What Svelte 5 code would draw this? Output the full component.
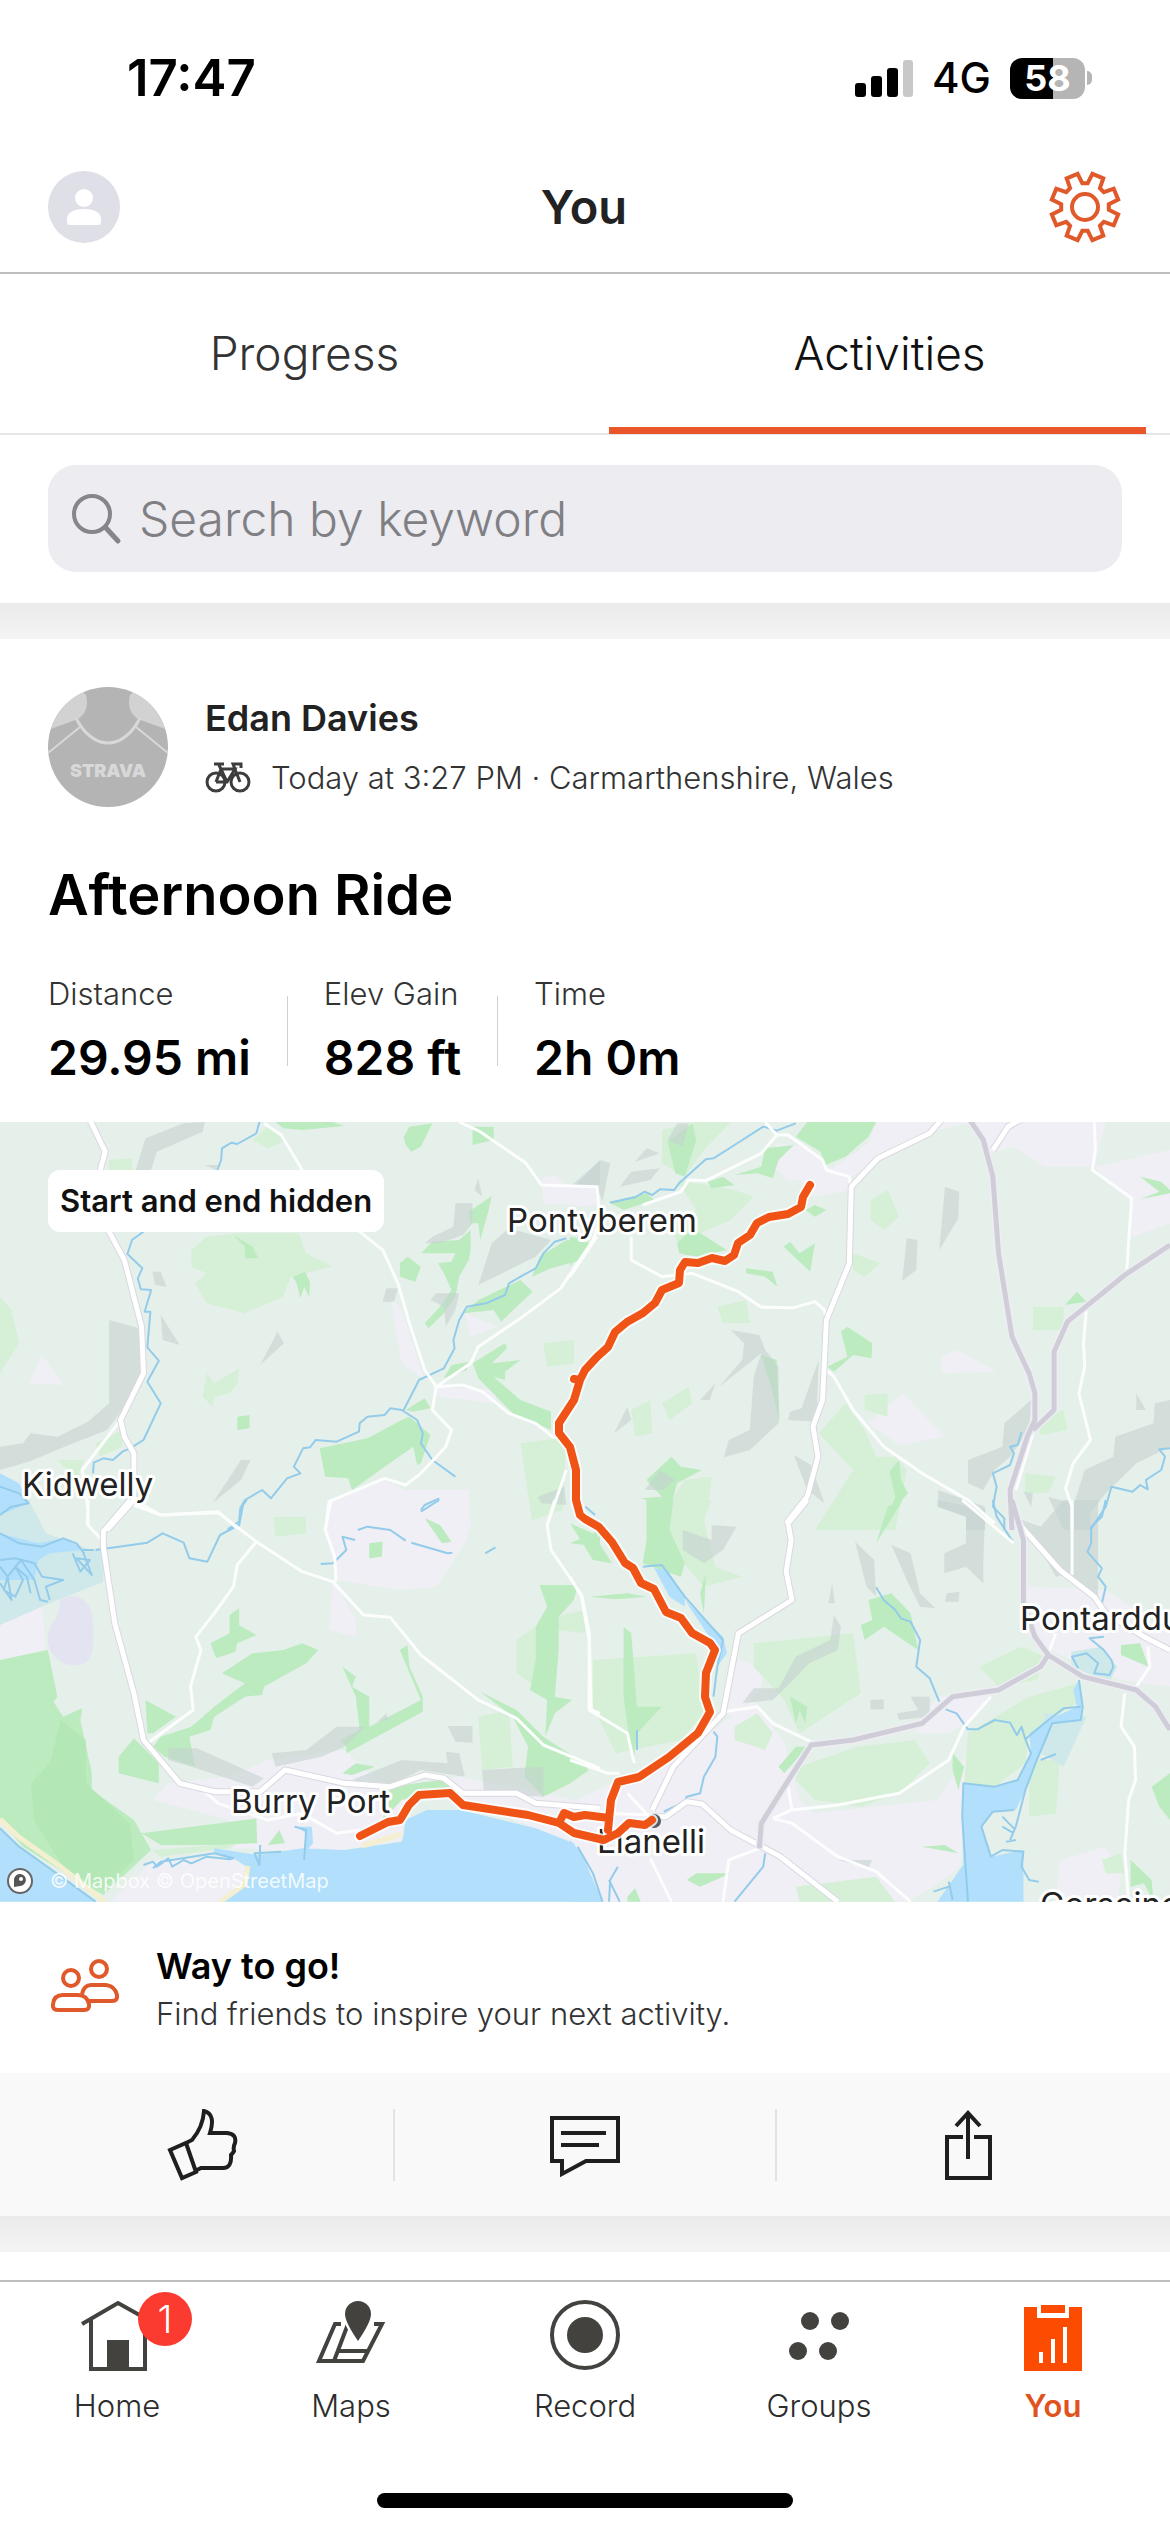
<script>
  let query = $state('');
  let section = $state('Activities');

  const stats = [
    { label: 'Distance', value: '29.95 mi' },
    { label: 'Elev Gain', value: '828 ft' },
    { label: 'Time', value: '2h 0m' }
  ];

  // Outline of the settings gear: eight teeth round the centre.
  const gear = (() => {
    const pts = [];
    for (let k = 0; k < 8; k++) {
      const mid = 22.5 + k * 45;
      for (const [offset, r] of [[-16, 24], [-10, 34], [10, 34], [16, 24]]) {
        const a = ((mid + offset) * Math.PI) / 180;
        pts.push(`${(37 + r * Math.sin(a)).toFixed(1)},${(37 - r * Math.cos(a)).toFixed(1)}`);
      }
    }
    return pts.join(' ');
  })();

  // Each list entry is "x y x y ..." in tile units; a tile is 1568 by 1260 units and covers 600 by 420.
  const tiles = [
    {
      at: 'translate(0 -12) scale(0.38265 0.33333)',
      urban: ['860 1180 1000 1110 1060 1140 1225 1140 1230 1260 850 1260', '1020 560 1050 600 1110 810 1050 760', '1215 610 1300 650 1230 680', '75 820 110 735 165 825', '1130 830 1300 840 1290 880 1150 860', '1415 205 1450 195 1480 225 1560 230 1565 285 1420 280'],
      meadow: ['500 420 540 380 620 370 780 370 800 430 870 470 760 500 740 560 640 610 540 580 510 520 540 490 500 470', '0 560 30 600 50 700 0 790', '540 790 560 820 625 775 622 820 600 850 560 860 555 890 530 860', '660 90 700 50 750 90 700 115', '1420 700 1500 690 1500 760 1430 770', '1360 1000 1480 980 1470 1200 1390 1230', '150 1050 220 1050 200 1110', '285 150 345 145 345 180 285 180', '250 1000 320 960 320 1010 260 1040'],
      wood: ['720 36 870 36 900 48 790 60 740 55', '1055 80 1070 50 1130 40 1100 110 1075 125 1060 105', '1235 50 1290 50 1290 90 1235 105', '1225 305 1285 258 1275 310 1255 390 1250 340 1230 340', '1100 430 1130 395 1200 390 1230 360 1230 420 1225 450 1200 500 1190 560 1160 610 1120 655 1110 640 1150 590 1180 540 1160 490 1145 460 1180 455 1190 430 1160 430', '1045 460 1065 440 1100 470 1085 515 1045 500', '1390 500 1410 440 1480 390 1540 400 1520 450 1440 475', '1210 610 1250 570 1360 510 1392 545 1350 590 1310 635 1290 600', '610 375 660 410 675 445 640 445 640 410', '765 500 797 485 810 515 808 560 795 530 785 565 775 520', '1235 760 1320 700 1325 715 1285 760 1360 750 1320 785 1320 810 1290 800 1360 870 1440 905 1440 960 1340 910 1250 805', '1160 805 1180 765 1225 755 1220 780', '835 1015 960 985 1050 930 1070 920 1125 975 1100 1060 1090 1065 1080 1010 1000 1075 920 1140 910 1105 850 1100', '1060 900 1110 865 1125 895 1080 905', '620 920 652 915 652 955 620 960'],
      hill: ['355 180 380 85 480 40 535 36 530 65 410 125 395 180', '285 630 380 660 370 830 345 860 280 960 180 1005 75 1055 0 1080 0 1010 60 1000 80 970 150 980 230 935 285 880', '1505 225 1568 150 1568 225', '1250 525 1285 400 1330 355 1440 390 1400 440', '1190 280 1235 280 1235 340 1210 375 1150 400 1110 400 1130 380 1185 350', '1240 240 1250 205 1260 260', '1000 575 1010 535 1040 535 1030 575', '1125 570 1140 550 1200 550 1190 600 1165 650 1160 590', '398 485 420 485 435 530 405 525', '420 615 470 705 425 690', '680 765 725 665 742 700', '555 1180 630 1050 655 1050 630 1110', '1405 1160 1475 1130 1480 1185 1415 1180', '535 165 570 165 565 180'],
      marsh: ['0 1190 75 1180 100 1240 105 1260 0 1260'],
      water: ['0 1090 50 1120 75 1180 0 1215'],
      river: ['678 36 670 70 620 102 605 98 580 115 578 150 568 180', '375 365 345 390 333 432 372 475 360 505 368 538 395 540 378 605 393 605 385 712 415 752 385 815 420 880 375 990 340 1015 320 1025 295 1050 270 1045 245 1058 243 1090', '1480 385 1450 395 1420 430 1400 475 1365 497 1330 520 1320 555 1270 580 1220 590 1200 630 1185 690 1188 715 1160 775 1095 810 1055 900', '1190 1100 1130 1050 1100 1000 1105 970 1090 930 1050 900 1020 895 1005 915 960 920 940 940 938 965 880 995 825 990 810 1012 792 1015 768 1070 785 1090 750 1105 708 1165 685 1140 640 1170 628 1195 625 1235 595 1258', '1100 1200 1110 1185 1148 1165', '0 1130 50 1150 75 1180 30 1190 0 1215'],
      lane: ['690 40 735 75 790 180 830 260 940 365 1000 420 1040 520 1070 640 1110 780 1140 830 1210 825 1260 845 1330 910 1400 940 1450 985', '1140 830 1230 760 1250 710 1360 625 1465 535 1550 390 1568 330 1560 230 1415 225 1375 160 1255 65 1200 36', '1140 830 1130 900 1180 960 1165 1010 1100 1090 1060 1125 1005 1105 860 1175 850 1260', '315 930 215 1080 230 1200 228 1245', '350 1185 420 1215 570 1205 620 1255', '1480 1080 1430 1245'],
      road: ['235 30 275 125 262 180 285 365 325 450 370 650 375 790 315 930 325 980 350 1030 350 1170 280 1260'],
      trunk: []
    },
    {
      at: 'translate(570 -12) scale(0.38265 0.33333)',
      urban: ['540 100 620 110 670 170 730 200 735 240 640 260 600 210 570 210 530 170', '800 36 1050 36 960 60 800 140 740 200 680 180 780 100', '1060 36 1400 36 1370 170 1240 170 1160 110 1100 130', '970 740 1010 720 1115 785 970 790', '780 940 870 850 980 980 860 1005', '1370 170 1568 120 1568 340 1470 380 1460 270', '0 225 70 230 75 280 40 290 0 285'],
      meadow: ['240 60 330 36 420 36 350 120 300 200 240 160', '280 210 430 240 480 260 420 330 280 400 270 360 330 300', '785 270 830 240 860 320 820 360 785 330', '740 430 810 460 770 500 740 480', '385 590 460 570 470 640 400 640', '1190 1090 1270 1100 1250 1150 1190 1150', '1210 590 1290 590 1290 660 1210 660', '770 855 830 850 830 920 770 900', '650 970 720 880 770 960 800 1040 850 1040 880 1080 850 1260 640 1260 740 1080', '160 900 210 870 215 970 170 980', '240 880 310 830 320 880 260 930', '300 1110 370 1100 360 1200 280 1260 210 1260', '1220 930 1290 900 1300 960 1230 975'],
      wood: ['590 80 620 36 800 36 780 80 720 140 668 165 655 125', '255 95 320 40 330 90 300 200 275 190', '430 195 500 170 510 115 585 105 545 150 530 205 490 190', '360 215 400 200 430 225 370 235', '280 400 320 355 410 420 330 440 285 430', '558 410 575 395 600 430 640 400 628 485', '460 475 530 485 542 530 510 500 460 490', '708 665 725 650 790 700 788 745 740 735 690 785 672 770 725 740', '615 300 640 285 670 300 640 320', '1293 585 1325 545 1350 575', '1490 200 1545 215 1568 240 1568 250 1490 268 1540 245', '185 1165 240 1160 200 1110 265 1040 290 1070 345 1080 280 1120 270 1160 240 1260 230 1180', '835 1085 860 1050 865 1110 883 1150 845 1200 815 1260 850 1160', '0 380 50 390 0 470', '500 735 540 750 548 940 530 850', '100 275 200 250 220 270 140 300'],
      hill: ['5 225 80 150 105 160 85 275 70 230', '280 40 310 40 295 110 255 90', '130 230 160 185 235 175 210 210', '170 155 200 115 235 130', '980 230 1017 245 1015 325 965 420', '880 385 908 390 905 480 868 512', '420 660 495 675 510 720 545 770 545 940 470 1020 402 1042 415 990 470 960 480 800 500 730 390 830 450 750 455 700', '570 930 575 905 605 895 650 750 645 900 640 935', '585 1035 630 1065 665 1180 620 1140', '115 970 150 890 160 930', '340 870 380 820 365 870', '195 1140 235 1080 275 1110 240 1140', '1040 1120 1040 1050 1130 1010 1135 940 1205 870 1200 960 1150 1040 1110 1080 1080 1140', '962 1140 1085 1190 1085 1260 1035 1260 1035 1220 962 1190', '1425 980 1525 940 1528 880 1568 870 1568 1010 1480 1060 1400 1150 1360 1210 1360 1260 1310 1260 1320 1170 1345 1080 1420 1040', '1480 850 1505 900 1480 900', '1250 1160 1310 1180 1310 1260 1290 1260', '1185 1145 1210 1150 1205 1190'],
      marsh: [],
      water: [],
      river: ['590 40 540 62 505 50 430 105 375 145 355 148 285 220 272 240 235 238 215 255 195 245 170 262 105 278', '1180 965 1170 1005 1150 1010 1160 1030 1150 1065 1105 1090 1115 1130 1105 1190 1135 1225 1135 1260', '1568 1015 1540 1018 1555 1040 1545 1080 1505 1110 1510 1138 1490 1125 1470 1145 1415 1130 1400 1190 1360 1260'],
      lane: ['670 780 690 800 740 900 820 1010 920 1090 1040 1170 1110 1240', '190 285 290 245 310 210 355 212 500 130 540 75 570 75 660 150 670 180 730 200 735 240', '510 36 540 75', '160 380 160 450 240 500 320 490 440 545 500 592 585 593 640 575 665 600 670 630', '1370 36 1373 120 1365 180 1468 265 1455 480', '1350 590 1342 700 1345 770 1330 850 1360 990 1315 1060 1295 1135 1312 1190 1312 1260', '70 380 0 500', '1210 970 1165 1140'],
      road: ['970 30 940 70 805 145 735 230 730 460 670 630 660 870 635 950 648 1040 620 1160 565 1240', '1175 30 1145 50 1105 120'],
      trunk: ['1045 30 1080 90 1105 200 1120 430 1155 680 1200 790 1215 850 1215 930 1195 980 1150 1140 1155 1260', '1568 405 1450 495 1300 635 1265 725 1265 900 1210 960']
    },
    {
      at: 'translate(0 378) scale(0.38265 0.33333)',
      urban: ['860 0 1225 0 1220 120 1140 260 1040 270 880 240 850 90', '870 240 930 360 930 410 860 390', '0 375 110 320 120 450 0 480', '440 850 600 830 700 780 900 750 1000 860 1200 830 1500 900 1568 920 1568 1205 1540 1140 1500 1030 1210 900 1110 880 1050 960 1055 1020 900 1050 700 1050 560 1040 600 960 400 900', '290 1205 400 1080 610 1075 650 1110 640 1150 580 1205'],
      meadow: ['715 50 800 50 800 100 720 110', '1250 650 1330 630 1340 800 1260 810', '1350 420 1400 380 1400 560 1350 520', '1450 350 1530 330 1530 400 1460 390', '400 1050 620 1030 600 1045 420 1070'],
      wood: ['0 480 125 450 150 590 140 605 165 650 215 625 210 660 240 820 240 870 350 960 395 1050 270 1185 200 1140 60 1040 0 960', '380 600 460 650 400 700 385 700', '310 770 350 715 415 790 415 850 310 820', '550 430 600 400 600 345 625 325 625 375 670 405 620 430 615 455 565 475', '580 520 600 505 660 460 740 450 790 430 832 450 800 490 690 560 685 585 640 590 560 650 550 690 495 710 510 800 430 770 400 740 420 710 500 680 560 620 640 550 600 530', '895 500 930 530 920 560 965 590 965 680 1100 600 1045 450 1065 435 1070 500 1105 590 1105 635 905 760 905 740 890 720 940 690 930 590', '370 1000 670 955 672 1030 560 1035 420 1035', '700 1035 730 990 745 1030', '895 820 930 790 980 800 920 825', '1410 255 1510 255 1500 300 1460 350 1460 450 1450 590 1495 600 1450 640 1425 710 1430 600 1385 570 1400 480 1400 380 1430 320', '1255 575 1350 630 1420 710 1540 800 1490 850 1420 890 1370 830 1380 740 1340 650', '1490 130 1568 90 1568 140', '965 130 1000 125 998 170 965 175', '1110 55 1150 75 1180 125 1155 130', '1020 860 1150 840 1180 860 1050 900 1000 960'],
      hill: ['440 745 515 745 690 835 660 860 500 800 440 780', '710 760 800 750 880 680 955 680 900 740 840 770 720 800', '920 840 1050 780 1170 790 1165 755 1200 760 1215 830 1100 810 1010 860', '1170 678 1235 678 1235 728 1190 725', '1260 810 1420 800 1420 890 1265 880', '985 665 1010 640 1015 660'],
      marsh: ['0 0 75 0 120 100 240 150 270 140 270 245 130 310 0 375'],
      water: ['0 100 100 130 170 115 220 150 130 160 100 180 90 240 0 240', '0 985 50 1040 160 1130 250 1205 0 1205', '580 1205 640 1150 645 1100 610 1075 560 1060 560 1045 675 1065 730 1055 790 1045 900 1050 1050 1025 1055 1000 1060 960 1115 930 1205 930 1400 985 1500 1030 1540 1140 1568 1205', '775 980 815 980 818 1030 795 1060 800 1000', '0 0 75 0 30 20 0 40'],
      river: ['250 150 385 128 425 100 480 128 495 175 542 185 575 105 625 75 635 15 645 0', '838 192 870 190 905 150 895 110 928 120', '935 90 960 80 1020 90 1060 122', '1075 128 1170 160 1182 158', '1268 160 1295 142', '1100 35 1148 0', '375 1095 400 1085 410 1100 440 1075 450 1100 480 1080 500 1090 540 1070 600 1078 610 1075 560 1060 420 1085 400 1105', '680 1035 678 1095 665 1060 735 1055', '1530 20 1555 45', '0 100 50 130 110 140 165 115 200 130 220 160', '0 180 40 175 90 190 110 230 165 240 120 260 130 300', '0 200 20 230 10 270 40 290 60 240 40 200 70 230 80 280', '190 160 210 215 235 180 200 175 240 225 215 150 245 150', '0 250 30 300 20 230 55 180 90 240 105 300 125 305', '770 980 800 990 795 1080', '0 985 50 1040 160 1130 250 1205'],
      lane: ['230 0 230 75 270 125', '350 0 420 45 570 38 670 125 790 215 870 245 950 345 1020 352 1100 465 1250 600 1350 655 1420 735 1568 805', '865 0 850 90 875 170 878 245', '670 125 620 195 610 260 560 340 512 410 525 450 498 560 505 630 385 730', '1450 0 1430 75 1440 150 1520 285 1540 400 1545 630 1568 640', '530 870 570 910 700 960 790 940 880 1000 940 990'],
      road: ['340 0 270 95 270 140 300 370 350 580 375 720 470 850 560 875 680 875 745 810 900 850 1020 860 1110 825 1160 835 1210 880 1350 880 1400 910 1568 925'],
      trunk: []
    },
    {
      at: 'translate(570 378) scale(0.38265 0.33333)',
      urban: ['340 720 480 600 560 730 600 900 640 940 960 900 1040 760 1020 1100 950 1160 880 1205 70 1205 30 1020 0 1000 0 910 110 850 250 800', '440 480 500 500 500 560 430 650 400 640', '960 590 1110 570 1060 650 990 700 900 700', '1280 1080 1400 1040 1440 1120 1430 1205 1270 1205', '1190 260 1400 270 1568 400 1568 560 1440 540 1270 460 1190 400'],
      meadow: ['430 680 490 640 530 700 510 750 430 720', '60 480 330 460 350 640 290 720 120 760 60 620', '600 800 750 740 900 720 940 790 860 880 760 920 640 900 590 840', '1070 500 1180 440 1240 470 1220 540 1120 560', '1040 700 1200 590 1330 550 1340 600 1200 700 1190 790 1110 860 1030 850', '1200 780 1280 780 1270 940 1200 950', '250 0 370 0 350 60 380 200 450 230 350 260 290 180 220 100', '480 430 740 400 760 580 600 700 560 600 480 500', '1390 1080 1440 1060 1450 1120 1400 1120', '590 1160 800 1130 850 1205 600 1205'],
      wood: ['0 70 60 100 110 190 60 180', '200 0 270 0 260 90 300 190 290 230 190 190 200 120', '780 300 840 280 890 340 910 450 820 380 770 420 760 375 790 360', '140 380 160 400 175 620 240 620 175 700 165 800 140 590', '50 290 150 280 200 290 120 298', '0 780 50 810 0 850', '800 130 870 0 830 20', '1000 760 1030 800 1015 870 1000 810', '1440 435 1490 430 1512 500 1440 465', '1465 1080 1520 1140 1525 1205 1500 1150 1465 1160', '305 1140 330 1120 420 1120 340 1160', '150 1190 170 1165 185 1205 150 1205', '1520 860 1568 820 1568 960 1540 920', '575 590 620 620 615 670 600 630 590 670', '545 800 590 740 620 740 560 820', '920 1040 980 1035 1015 1060', '340 280 355 220 350 340'],
      hill: ['295 90 370 120 370 75 435 80 400 150 350 190 295 150', '745 125 795 180 800 290 775 260', '840 135 890 160 915 280 955 325 915 320 880 240', '978 160 1035 130 1035 50 960 20 960 0 1085 30 1080 190 1080 250 1035 200 978 220', '675 310 685 250 692 310', '985 280 1018 275 1015 305 980 305', '450 610 480 565 545 565 590 470 680 420 690 345 708 380 700 450 625 490 575 550 530 600', '785 600 820 598 820 628 785 628', '855 640 910 630 890 590 940 590 940 650 860 660', '1180 60 1230 80 1290 0 1380 0 1380 290 1300 220 1270 230 1220 130', '700 1080 790 1080 780 1105'],
      marsh: ['1240 640 1350 650 1290 800 1230 760', '1310 455 1390 440 1430 500 1410 545 1310 500'],
      water: ['0 1020 30 1060 85 1205 0 1205', '1028 850 1110 860 1170 840 1205 760 1200 700 1250 660 1325 620 1315 570 1330 540 1340 620 1335 660 1260 670 1220 780 1190 870 1165 930 1105 935 1075 980 1100 1070 1185 1050 1185 1205 1030 1205 1025 950', '220 205 255 210 300 290 300 320 260 290', '300 300 400 410 410 460 385 500 375 430', '960 1205 1000 1140 1030 1090 1030 1205'],
      river: ['190 200 240 195 300 290 400 420 385 500 375 590', '375 695 385 710 380 770 350 830 340 880 305 890 300 905 245 935', '800 262 820 300 850 330 865 355 890 365 915 420 905 500 940 535 965 605', '982 628 1010 640 1040 688 1065 688 1110 660 1150 668 1168 705 1180 680 1190 718 1250 660 1290 625 1335 620', '1400 0 1390 50 1362 80 1362 130 1352 155 1390 205 1380 230 1400 260 1390 310', '1105 0 1115 50 1160 130', '510 1060 505 1100 430 1205', '125 1100 105 1140 102 1205', '102 1140 130 1205', '1190 718 1205 760 1170 840 1110 860 1028 850 1025 950 1040 1205', '990 1145 1000 1200', '950 1175 990 1160', '1130 950 1160 985', '1130 980 1160 1000', '1140 1025 1165 1020', '175 690 175 750', '1330 540 1340 620 1335 660 1260 670 1220 780 1190 870 1165 980 1150 1020', '1160 930 1105 935 1075 980 1100 1070 1130 1050 1185 1055 1180 1100 1200 1140 1225 1145', '1230 780 1270 762', '1328 505 1312 470 1350 460 1380 490 1370 520 1410 525 1420 500 1415 480 1395 450 1358 415 1395 410', '20 1040 60 1120 85 1205'],
      lane: ['1025 0 1160 130', '1312 0 1312 225', '1270 400 1250 460', '400 635 490 620 530 670 620 720 640 730', '1100 590 1030 680 990 780 860 880 700 915 580 930 530 955', '570 860 580 930', '530 955 580 970 700 1070 800 1115 890 1205', '495 1045 415 1080 400 1205', '1480 560 1515 500 1510 440', '1450 580 1440 680 1475 740 1478 840 1460 900 1450 1060 1460 1205', '0 230 30 290 50 420 50 630 150 700 168 790', '0 780 100 820 130 820', '210 1075 265 1205', '150 880 215 960', '0 920 90 940 215 945'],
      road: ['620 0 570 70 578 120 565 215 580 300 440 400 400 640 270 800 215 930', '215 950 250 950 305 905 345 912 420 990 550 1070 700 1205', '1180 80 1280 210 1370 290 1400 340 1500 410 1568 450'],
      trunk: ['1155 0 1185 120 1185 310 1215 410 1250 465 1340 530 1480 570 1530 620 1568 690', '1250 465 1230 500 1120 570 1000 590 920 670 740 720 630 735 560 860 500 970 495 1045']
    }
  ];

  const layers = [
    { kind: 'urban', area: true },
    { kind: 'meadow', area: true },
    { kind: 'marsh', area: true },
    { kind: 'wood', area: true },
    { kind: 'hill', area: true },
    { kind: 'water', area: true },
    { kind: 'river', area: false },
    { kind: 'lane', area: false },
    { kind: 'road', cls: 'road-edge', area: false },
    { kind: 'road', area: false },
    { kind: 'trunk', cls: 'trunk-edge', area: false },
    { kind: 'trunk', area: false }
  ];

  const toPath = (shapes, closed) => shapes.map((s) => `M${s}${closed ? 'Z' : ''}`).join('');

  const route =
    'M810 63 803 75 801 85 788 92 769 95 757 101 750 113 738 121 734 133 725 139 712 136 698 141 685 140 680 148 679 161 662 168 655 181 643 191 627 200 615 210 608 225 597 235 585 248 580 258 574 278 559 301 559 311 570 325 576 348 576 378 580 393 585 397 599 405 612 420 625 441 633 446 641 461 654 467 666 490 681 496 692 511 710 521 715 528 706 551 705 575 710 590 698 611 669 635 639 655 618 660 611 678 608 708' +
    'M580 258 574 257M609 696 585 693 574 695 564 691 559 701 574 711 604 718 618 711 629 701 645 703 652 698' +
    'M559 701 528 693 463 683 450 671 419 673 409 683 400 698 388 700 360 714';

  const places = [
    { name: 'Pontyberem', x: 507, y: 110 },
    { name: 'Kidwelly', x: 22, y: 374 },
    { name: 'Burry Port', x: 231, y: 691 },
    { name: 'Llanelli', x: 597, y: 731 },
    { name: 'Pontarddulais', x: 1020, y: 508 },
    { name: 'Gorseinon', x: 1040, y: 794 }
  ];
</script>

<div class="app">
  <div class="status">
    <span class="clock">17:47</span>
    <div class="status-right">
      <svg width="58" height="37" viewBox="0 0 58 37" aria-hidden="true">
        <rect x="0" y="23" width="11" height="14" rx="3" />
        <rect x="16" y="16" width="11" height="21" rx="3" />
        <rect x="32" y="8" width="11" height="29" rx="3" />
        <rect x="48" y="0" width="10" height="37" rx="3" fill="#c8c8c8" />
      </svg>
      <span class="network">4G</span>
      <div class="battery"><span class="cell">58</span><span class="nub"></span></div>
    </div>
  </div>

  <header>
    <button class="icon-btn" aria-label="Profile">
      <svg width="72" height="72" viewBox="0 0 72 72">
        <circle cx="36" cy="36" r="36" fill="#dfdfe7" />
        <circle cx="36" cy="27" r="9" fill="#fff" />
        <path d="M19 51v-4q2-9 17-9t17 9v4q0 3-3 3H22q-3 0-3-3z" fill="#fff" />
      </svg>
    </button>
    <h1>You</h1>
    <button class="icon-btn" aria-label="Settings">
      <svg width="74" height="74" viewBox="0 0 74 74" fill="none" stroke="#e0592a" stroke-width="4">
        <polygon points={gear} />
        <circle cx="37" cy="37" r="13" />
      </svg>
    </button>
  </header>

  <div class="tabs" role="tablist">
    {#each ['Progress', 'Activities'] as name}
      <button role="tab" aria-selected={section === name} class:active={section === name} onclick={() => (section = name)}>{name}</button>
    {/each}
  </div>

  <div class="search">
    <label class="field">
      <svg width="52" height="52" viewBox="0 0 52 52" fill="none" stroke="#85858a" stroke-linecap="round">
        <circle cx="21" cy="21" r="18" stroke-width="4" />
        <path d="M35 35 47 48" stroke-width="5" />
      </svg>
      <input type="text" placeholder="Search by keyword" aria-label="Search by keyword" bind:value={query} />
    </label>
  </div>

  <div class="strip"></div>

  <article>
    <div class="summary">
      <div class="athlete">
        <svg class="avatar" width="120" height="120" viewBox="0 0 120 120" aria-hidden="true">
          <defs><clipPath id="disc"><circle cx="60" cy="60" r="60" /></clipPath></defs>
          <g clip-path="url(#disc)">
            <rect width="120" height="120" fill="#b4b4b4" />
            <path d="M0 43 30 32Q42 24 38 8L30 0H0zM120 43 90 32Q78 24 82 8L90 0H120z" fill="#d2d2d2" />
            <path d="M28 31C36 47 48 56 60 56S84 47 92 31" fill="none" stroke="#d8d8d8" stroke-width="3" />
            <path d="M0 66 32 40M120 66 88 40" stroke="#d8d8d8" stroke-width="2" />
          </g>
          <text x="60" y="90" text-anchor="middle" class="jersey">STRAVA</text>
        </svg>
        <div class="who">
          <h2>Edan Davies</h2>
          <p>
            <svg width="46" height="32" viewBox="0 0 46 32" fill="none" stroke="#3d3d3d" stroke-width="3" aria-hidden="true">
              <circle cx="11" cy="20" r="9" /><circle cx="35" cy="20" r="9" />
              <path d="M11 20 16 7H30L22 20H11M22 20 14 3M9 2H19M35 20 28 2H36V6" />
            </svg>
            <span>Today at 3:27 PM · Carmarthenshire, Wales</span>
          </p>
        </div>
      </div>
      <h3>Afternoon Ride</h3>
      <dl>
        {#each stats as s}
          <div><dt>{s.label}</dt><dd>{s.value}</dd></div>
        {/each}
      </dl>
    </div>

    <div class="map">
      <svg viewBox="0 0 1170 780" role="img" aria-label="Route map">
        <rect width="1170" height="780" fill="#e6f0ea" />
        {#each layers as layer}
          {#each tiles as tile}
            <g transform={tile.at}>
              <path class={layer.cls ?? layer.kind} d={toPath(tile[layer.kind], layer.area)} />
            </g>
          {/each}
        {/each}
        <path d="M61 598 86 618 86 661 130 702 134 738 103 768 65 748 34 698 31 661 50 641z" fill="#b0e6b1" opacity=".8" />
        <path d="M60 478C72 470 92 474 93 500S94 541 78 543 46 532 48 514 60 502 60 478z" fill="#e4e3f2" />
        <path d="M0 697 19 715 61 745 105 780" fill="none" stroke="#f3efd0" stroke-width="5" />
        <path d="M220 780 245 762 248 744M362 724 402 712" fill="none" stroke="#f3efd0" stroke-width="5" />
        {#each places as p}
          <text class="place" x={p.x} y={p.y}>{p.name}</text>
        {/each}
        <circle cx="654" cy="699" r="7" fill="#555c66" />
        <path class="route-halo" d={route} />
        <path class="route" d={route} />
        <circle cx="20" cy="759" r="12" fill="#fff" stroke="#666" stroke-width="2" />
        <path d="M14 765V757A6 6 0 1 1 20 764z" fill="#555" />
        <circle cx="21" cy="757" r="2" fill="#fff" />
        <text class="credit" x="50" y="766">© Mapbox © OpenStreetMap</text>
      </svg>
      <span class="hidden-note">Start and end hidden</span>
    </div>

    <div class="cheer">
      <svg width="72" height="66" viewBox="0 0 72 66" fill="none" stroke="#e0592a" stroke-width="4" aria-hidden="true">
        <circle cx="23" cy="21" r="8" /><circle cx="51" cy="12" r="8" />
        <path d="M5 47Q6 38 15 38H30Q39 38 41 47Q42 53 36 53H10Q4 53 5 47z" />
        <path d="M34 37Q36 28 43 28H58Q67 29 69 38Q70 44 64 44H41" />
      </svg>
      <div>
        <h4>Way to go!</h4>
        <p>Find friends to inspire your next activity.</p>
      </div>
    </div>

    <div class="actions">
      <button aria-label="Give kudos">
        <svg width="72" height="72" viewBox="0 0 72 72" fill="none" stroke="#1f1f1f" stroke-width="4">
          <path d="M4 41 20 34 30 63 16 69zM20 34 26 31Q37 18 38 2Q50 5 44 24H61Q71 25 69 34Q67 38 68 42Q67 44 65 46Q66 59 57 59H35L29 62" />
        </svg>
      </button>
      <button aria-label="Comment">
        <svg width="72" height="72" viewBox="0 0 72 72" fill="none" stroke="#1f1f1f" stroke-width="4">
          <path d="M3 9H69V52H37L13 65V52H3zM12 24H57M12 36H50" />
        </svg>
      </button>
      <button aria-label="Share">
        <svg width="72" height="72" viewBox="0 0 72 72" fill="none" stroke="#1f1f1f" stroke-width="4">
          <path d="M31 28H15V69H58V28H42M36 50V4M24 17 36 4 48 17" />
        </svg>
      </button>
    </div>
  </article>

  <div class="strip"></div>
  <div class="next-card"></div>

  <nav>
    <a href="#home">
      <span class="glyph">
        <svg width="72" height="72" viewBox="0 0 72 72">
          <path d="M1 24 37 3 71 22M10 18V69H64V18" fill="none" stroke="#43423f" stroke-width="4" />
          <rect x="26" y="40" width="22" height="29" fill="#43423f" />
        </svg>
        <span class="badge">1</span>
      </span>
      Home
    </a>
    <a href="#maps">
      <span class="glyph">
        <svg width="72" height="72" viewBox="0 0 72 72">
          <path d="M26 24H20L4 61H48L67 24H59M33 24 19 61M24 51H52" fill="none" stroke="#43423f" stroke-width="4" />
          <path d="M43 41Q30 22 30 14A13 13 0 0 1 56 14Q56 22 43 41z" fill="#43423f" stroke="#fff" stroke-width="5" paint-order="stroke" />
        </svg>
      </span>
      Maps
    </a>
    <a href="#record">
      <span class="glyph">
        <svg width="72" height="72" viewBox="0 0 72 72">
          <circle cx="36" cy="35" r="33" fill="none" stroke="#43423f" stroke-width="4" />
          <circle cx="36" cy="35" r="18" fill="#43423f" />
        </svg>
      </span>
      Record
    </a>
    <a href="#groups">
      <span class="glyph">
        <svg width="72" height="72" viewBox="0 0 72 72" fill="#43423f">
          <circle cx="27" cy="21" r="9" /><circle cx="57" cy="21" r="9" />
          <circle cx="15" cy="51" r="9" /><circle cx="45" cy="51" r="9" />
        </svg>
      </span>
      Groups
    </a>
    <a href="#you" class="current" aria-current="page">
      <span class="glyph">
        <svg width="72" height="72" viewBox="0 0 72 72">
          <path d="M7 7H65V71H7z" fill="#fc4c02" />
          <path d="M20 4H52V18H20z" fill="#fff" />
          <path d="M24 5H48V13H24z" fill="#fc4c02" />
          <path d="M24 63V52M36 63V39M48 63V27" stroke="#fff" stroke-width="4" />
        </svg>
      </span>
      You
    </a>
  </nav>
  <div class="home-bar"></div>
</div>

<style>
  :global(body) { background: #fff; }
  .app {
    font-family: Inter, "Liberation Sans", sans-serif;
    color: #222;
    display: flex;
    flex-direction: column;
    min-height: 100vh;
    overflow: hidden;
  }
  h1, h2, h3, h4, p, dl, dd, dt { margin: 0; }
  button { font: inherit; color: inherit; background: none; border: 0; padding: 0; cursor: pointer; }
  svg { display: block; flex: none; }

  .status { display: flex; justify-content: space-between; padding: 50px 78px 36px 127px; color: #000; }
  .clock { font-size: 51px; line-height: 56px; font-weight: 600; }
  .status-right { display: flex; align-items: center; gap: 19px; }
  .network { font-size: 42px; line-height: 56px; font-weight: 500; }
  .battery { display: flex; align-items: center; gap: 2px; }
  .cell {
    width: 75px; border-radius: 12px; text-align: center;
    font-size: 36px; line-height: 41px; font-weight: 700; color: #fff;
    background: linear-gradient(90deg, #000 58%, #b5b5b5 58%);
  }
  .nub { width: 5px; height: 14px; border-radius: 0 5px 5px 0; background: #b5b5b5; }

  header {
    display: flex; align-items: center; justify-content: space-between;
    height: 130px; padding: 0 48px; border-bottom: 2px solid #bdbdbf;
  }
  h1 { font-size: 47px; line-height: 56px; font-weight: 600; }

  .tabs { display: flex; gap: 24px; border-bottom: 2px solid #e6e6e8; padding-left: 24px; }
  .tabs button {
    flex: 1; position: relative;
    font-size: 46px; line-height: 56px; padding: 51px 0 52px; font-weight: 300; color: #333;
  }
  .tabs .active { color: #111; }
  .tabs .active::after {
    content: ""; position: absolute; left: 0; right: 24px; bottom: -1px; height: 7px; background: #e8562a;
  }

  .search { padding: 30px 48px 31px; }
  .field { display: flex; align-items: center; gap: 16px; height: 107px; padding: 0 23px; border-radius: 28px; background: #ececf1; }
  input { flex: 1; min-width: 0; border: 0; outline: 0; background: none; font: 300 48px/60px Inter, "Liberation Sans", sans-serif; padding: 0; color: #222; }
  input::placeholder { color: #7f7f84; opacity: 1; }

  .strip { height: 36px; background: linear-gradient(#ebebeb, #f4f4f4); }

  .summary { padding: 48px 48px 36px; }
  .athlete { display: flex; align-items: center; gap: 37px; }
  .jersey { font-size: 18px; font-weight: 900; fill: #d8d8d8; }
  .who { display: flex; flex-direction: column; gap: 14px; }
  h2 { font-size: 36px; line-height: 48px; font-weight: 600; }
  .who p { display: flex; align-items: center; gap: 20px; font-size: 31px; line-height: 44px; font-weight: 300; color: #333; }
  h3 { margin-top: 54px; font-size: 56px; line-height: 68px; font-weight: 600; color: #000; }
  dl { display: flex; margin-top: 45px; }
  dl div { position: relative; padding-right: 73px; }
  dl div:not(:last-child)::after {
    content: ""; position: absolute; right: 36px; top: 22px; bottom: 20px; width: 1px; background: #d0d0d0;
  }
  dt { font-size: 31px; line-height: 40px; font-weight: 300; color: #333; }
  dd { margin-top: 16px; font-size: 48px; line-height: 56px; font-weight: 600; color: #000; }

  .map { position: relative; }
  .map svg { width: 100%; height: auto; }
  .map path { vector-effect: non-scaling-stroke; }
  .urban { fill: #f0eff5; }
  .meadow { fill: #d5f0d6; }
  .wood { fill: #bcebc0; }
  .hill { fill: #c6d2d0; fill-opacity: .6; }
  .marsh { fill: #cfe9ea; }
  .water { fill: #b2e0fc; }
  .river { fill: none; stroke: #93cbea; stroke-width: 2; stroke-linejoin: round; }
  .lane { fill: none; stroke: #fcfdfd; stroke-width: 3; stroke-linejoin: round; }
  .road-edge { fill: none; stroke: #d9d8e0; stroke-width: 7; stroke-linejoin: round; }
  .road { fill: none; stroke: #fff; stroke-width: 5; stroke-linejoin: round; }
  .trunk-edge { fill: none; stroke: #eeedf3; stroke-width: 8; stroke-linejoin: round; }
  .trunk { fill: none; stroke: #cfcdd7; stroke-width: 5; stroke-linejoin: round; }
  .route-halo { fill: none; stroke: #fff; stroke-width: 12; stroke-linejoin: round; stroke-linecap: round; opacity: .8; }
  .route { fill: none; stroke: #f05316; stroke-width: 8; stroke-linejoin: round; stroke-linecap: round; }
  .place { font-size: 33px; fill: #222; stroke: #fff; stroke-width: 6px; stroke-linejoin: round; paint-order: stroke; }
  .credit { font-size: 20px; fill: #fff; fill-opacity: .85; }
  .hidden-note {
    position: absolute; left: 48px; top: 48px; padding: 0 12px; border-radius: 12px;
    background: #fff; color: #111; font-size: 31px; line-height: 62px; font-weight: 600;
  }

  .cheer { display: flex; align-items: center; gap: 36px; padding: 40px 48px 35px; }
  h4 { font-size: 36px; line-height: 48px; font-weight: 600; color: #000; }
  .cheer p { font-size: 31px; line-height: 48px; font-weight: 300; color: #333; }

  .actions { display: flex; padding: 36px 12px 35px; background: #f9f9f9; }
  .actions button { flex: 1; display: flex; justify-content: center; }
  .actions button + button { border-left: 2px solid #e3e3e3; }

  .next-card { height: 28px; }
  nav { display: flex; border-top: 2px solid #bdbdbf; padding-top: 18px; }
  nav a {
    flex: 1; display: flex; flex-direction: column; align-items: center; gap: 14px;
    font-size: 31px; line-height: 40px; font-weight: 300; color: #2d2d2d; text-decoration: none;
  }
  .glyph { position: relative; }
  .badge {
    position: absolute; left: 57px; top: -8px; width: 54px; border-radius: 27px;
    background: #fc3b30; color: #fff; text-align: center; font-size: 38px; line-height: 54px;
  }
  nav .current { color: #e0531f; font-weight: 600; }
  .home-bar { width: 416px; max-width: 60%; height: 15px; border-radius: 8px; background: #000; margin: 67px auto 24px; }
</style>
